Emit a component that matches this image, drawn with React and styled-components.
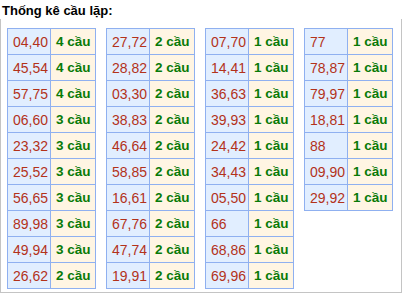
import React from 'react';
import styled, { createGlobalStyle } from 'styled-components';

const GlobalStyle = createGlobalStyle`
  html, body {
    margin: 0;
    padding: 0;
    background: #ffffff;
    font-family: "Liberation Sans", Arial, sans-serif;
  }
`;

const Wrapper = styled.div`
  width: 402px;
`;

const Title = styled.div`
  height: 19px;
  padding-left: 2px;
  font-size: 13px;
  font-weight: bold;
  line-height: 21px;
  color: #000000;
`;

const Box = styled.div`
  border: 1px solid #c4c4c4;
  border-top: none;
  padding: 9px 0 3px 6px;
  display: flex;
  align-items: flex-start;
  gap: 10px;
`;

const Table = styled.table`
  border-collapse: collapse;
  width: 89px;
  table-layout: fixed;
`;

const Cell = styled.td`
  border: 1px solid #8fb0f0;
  height: 26px;
  padding: 0 0 0 5px;
  box-sizing: border-box;
  white-space: nowrap;
  vertical-align: middle;
  background: ${(p) => (p.$count ? '#fff5e3' : '#e1eeff')};
  color: ${(p) => (p.$count ? '#087a08' : '#b3321a')};
  font-size: ${(p) => (p.$count ? '13.5px' : '14px')};
  font-weight: ${(p) => (p.$count ? 'bold' : 'normal')};
  width: ${(p) => (p.$count ? '45px' : '43px')};
`;

const columns = [
  [
    ['04,40', 4], ['45,54', 4], ['57,75', 4], ['06,60', 3], ['23,32', 3],
    ['25,52', 3], ['56,65', 3], ['89,98', 3], ['49,94', 3], ['26,62', 2],
  ],
  [
    ['27,72', 2], ['28,82', 2], ['03,30', 2], ['38,83', 2], ['46,64', 2],
    ['58,85', 2], ['16,61', 2], ['67,76', 2], ['47,74', 2], ['19,91', 2],
  ],
  [
    ['07,70', 1], ['14,41', 1], ['36,63', 1], ['39,93', 1], ['24,42', 1],
    ['34,43', 1], ['05,50', 1], ['66', 1], ['68,86', 1], ['69,96', 1],
  ],
  [
    ['77', 1], ['78,87', 1], ['79,97', 1], ['18,81', 1], ['88', 1],
    ['09,90', 1], ['29,92', 1],
  ],
];

const App = () => (
  <Wrapper>
    <GlobalStyle />
    <Title>Thống kê cầu lặp:</Title>
    <Box>
      {columns.map((rows, i) => (
        <Table key={i}>
          <tbody>
            {rows.map(([pair, n]) => (
              <tr key={pair}>
                <Cell>{pair}</Cell>
                <Cell $count>{n} cầu</Cell>
              </tr>
            ))}
          </tbody>
        </Table>
      ))}
    </Box>
  </Wrapper>
);

export default App;
